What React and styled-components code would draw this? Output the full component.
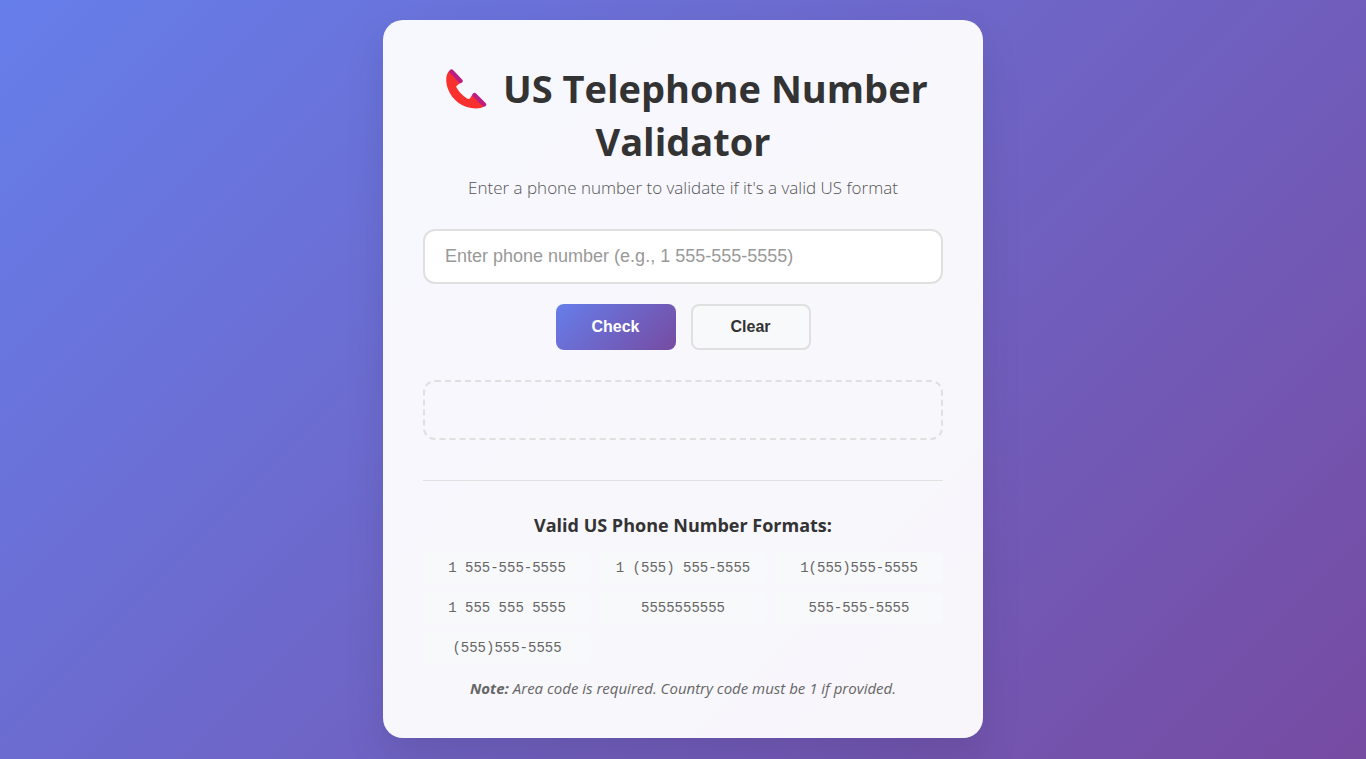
import React, { useState } from "react";
import styled, { createGlobalStyle } from "styled-components";

const GlobalStyle = createGlobalStyle`
  *, *::before, *::after {
    box-sizing: border-box;
    margin: 0;
    padding: 0;
  }
  body {
    font-family: "Open Sans", "Noto Sans", sans-serif;
    color: #333;
  }
`;

const Page = styled.div`
  display: flex;
  align-items: flex-start;
  justify-content: center;
  min-height: 100vh;
  padding: 20px;
  background: linear-gradient(135deg, #667eea 0%, #764ba2 100%);
`;

const Card = styled.main`
  width: 100%;
  max-width: 600px;
  padding: 42px 40px 40px;
  border-radius: 20px;
  background: rgba(255, 255, 255, 0.95);
  box-shadow: 0 20px 40px rgba(0, 0, 0, 0.1);
  text-align: center;
`;

const Title = styled.h1`
  margin-bottom: 8px;
  font-size: 38px;
  font-weight: 700;
  line-height: 53px;
`;

const PhoneIcon = styled.svg`
  width: 55px;
  height: 40px;
  vertical-align: -6px;
`;

const Subtitle = styled.p`
  margin-bottom: 29px;
  color: #555;
  font-size: 17px;
  font-weight: 300;
  line-height: 24px;
`;

const PhoneInput = styled.input`
  display: block;
  width: 100%;
  height: 55px;
  margin-bottom: 20px;
  padding: 0 20px;
  border: 2px solid #e0e0e0;
  border-radius: 12px;
  background: #fff;
  color: #333;
  font-family: "Liberation Sans", Arial, sans-serif;
  font-size: 18px;
  outline: none;

  &::placeholder {
    color: #999;
  }
  &:focus {
    border-color: #667eea;
  }
`;

const ButtonRow = styled.div`
  display: flex;
  justify-content: center;
  gap: 15px;
  margin-bottom: 30px;
`;

const Button = styled.button`
  width: 120px;
  height: 46px;
  border: ${(p) => (p.$primary ? "none" : "2px solid #e0e0e0")};
  border-radius: 8px;
  background: ${(p) =>
    p.$primary ? "linear-gradient(135deg, #667eea 0%, #764ba2 100%)" : "#f8f9fa"};
  color: ${(p) => (p.$primary ? "#fff" : "#333")};
  font-family: "Liberation Sans", Arial, sans-serif;
  font-size: 16px;
  font-weight: 600;
  cursor: pointer;
`;

const Result = styled.output`
  display: flex;
  align-items: center;
  justify-content: center;
  min-height: 60px;
  margin-bottom: 40px;
  border: 2px dashed #e0e0e0;
  border-radius: 12px;
  font-size: 18px;
`;

const Formats = styled.section`
  padding-top: 32px;
  border-top: 1px solid #e0e0e0;
`;

const FormatsTitle = styled.h2`
  margin-bottom: 15px;
  font-size: 18px;
  font-weight: 700;
  line-height: 24px;
`;

const FormatGrid = styled.ul`
  display: grid;
  grid-template-columns: repeat(auto-fit, minmax(150px, 1fr));
  gap: 8px;
  margin-bottom: 14px;
  list-style: none;
`;

const Format = styled.li`
  padding: 8px;
  border-radius: 6px;
  background: #f8f9fa;
  color: #666;
  font-family: "Liberation Mono", "Courier New", monospace;
  font-size: 14px;
  line-height: 16px;
`;

const Note = styled.p`
  color: #666;
  font-size: 15px;
  font-style: italic;
  line-height: 20px;
`;

const formats = [
  "1 555-555-5555",
  "1 (555) 555-5555",
  "1(555)555-5555",
  "1 555 555 5555",
  "5555555555",
  "555-555-5555",
  "(555)555-5555",
];

const US_NUMBER = /^(1\s?)?(\(\d{3}\)|\d{3})[\s-]?\d{3}[\s-]?\d{4}$/;

export default function App() {
  const [value, setValue] = useState("");
  const [result, setResult] = useState("");

  const check = () =>
    setResult(`${US_NUMBER.test(value) ? "Valid" : "Invalid"} US number: ${value}`);
  const clear = () => {
    setValue("");
    setResult("");
  };

  return (
    <>
      <GlobalStyle />
      <Page>
        <Card>
          <Title>
            <PhoneIcon viewBox="0 0 55 40" aria-hidden="true">
              <path
                d="M11 2C7.500 6 7.500 13 10 20C14 31 25 39.500 38 39.500C42 39.500 45.500 38.500 47 36.500L37 27L34 26L32 29.500C31 30 30 30 29 29.500C25 27 21 23 18.500 18.500C18 17.500 18.500 17 19 16.500L23 13.500L22 11L13 2Z"
                fill="#f8312f"
              />
              <path
                d="M13.500 2.500L22.500 12M36.500 26L46 35.500"
                stroke="#bb1d80"
                strokeWidth="4.400"
                strokeLinecap="round"
              />
            </PhoneIcon>{" "}
            US Telephone Number Validator
          </Title>
          <Subtitle>Enter a phone number to validate if it's a valid US format</Subtitle>
          <PhoneInput
            type="tel"
            aria-label="Phone number"
            placeholder="Enter phone number (e.g., 1 555-555-5555)"
            value={value}
            onChange={(e) => setValue(e.target.value)}
          />
          <ButtonRow>
            <Button type="button" $primary onClick={check}>
              Check
            </Button>
            <Button type="button" onClick={clear}>
              Clear
            </Button>
          </ButtonRow>
          <Result>{result}</Result>
          <Formats>
            <FormatsTitle>Valid US Phone Number Formats:</FormatsTitle>
            <FormatGrid>
              {formats.map((f) => (
                <Format key={f}>{f}</Format>
              ))}
            </FormatGrid>
            <Note>
              <strong>Note:</strong> Area code is required. Country code must be 1 if provided.
            </Note>
          </Formats>
        </Card>
      </Page>
    </>
  );
}
